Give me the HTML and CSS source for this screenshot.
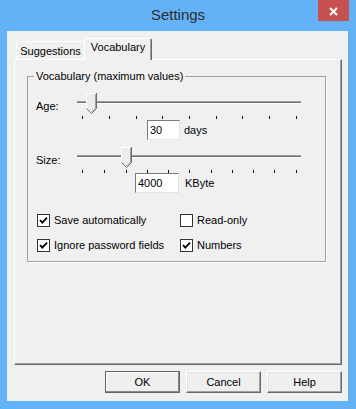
FILE: index.html
```html
<!DOCTYPE html>
<html>
<head>
    <meta charset="UTF-8">
    <title>Settings</title>
    <link rel="stylesheet" href="styles.css">
</head>
<body>
<div class="window">
    <div class="titlebar">
        <span class="title">Settings</span>
        <span class="close">
            <svg width="9" height="9" viewBox="0 0 9 9"><path d="M1 1 L8 8 M8 1 L1 8" stroke="#fff" stroke-width="2"/></svg>
        </span>
    </div>
    <div class="client">
        <div class="tabs">
            <div class="tab">Suggestions</div>
            <div class="tab active">Vocabulary</div>
        </div>
        <div class="panel">
            <fieldset class="group">
                <legend>Vocabulary (maximum values)</legend>

                <div class="slider-row">
                    <label>Age:</label>
                    <svg class="slider" width="226" height="27" viewBox="0 0 226 27">
                        <rect x="0" y="8" width="224" height="1" fill="#a0a0a0"/>
                        <rect x="0" y="9" width="224" height="1" fill="#6d6d6d"/>
                        <rect x="0" y="10" width="224" height="1" fill="#fff"/>
                        <g fill="#000">
                            <rect x="5" y="23" width="1" height="3"/>
                            <rect x="32" y="23" width="1" height="3"/>
                            <rect x="59" y="23" width="1" height="3"/>
                            <rect x="85" y="23" width="1" height="3"/>
                            <rect x="112" y="23" width="1" height="3"/>
                            <rect x="139" y="23" width="1" height="3"/>
                            <rect x="165" y="23" width="1" height="3"/>
                            <rect x="192" y="23" width="1" height="3"/>
                            <rect x="219" y="23" width="1" height="3"/>
                        </g>
                        <g transform="translate(9,0)">
                            <path d="M0.5 0.5 H10.5 V15.5 L5.5 20.5 L0.5 15.5 Z" fill="#ececec"/>
                            <path d="M0.5 15.5 V0.5 H9.5" fill="none" stroke="#fff"/>
                            <path d="M10.5 0 V15.5 L5.5 20.5 L0.5 15.5" fill="none" stroke="#6d6d6d"/>
                            <path d="M9.5 1 V15 L5.5 19" fill="none" stroke="#a0a0a0"/>
                        </g>
                    </svg>
                </div>
                <div class="value-row age-value">
                    <input class="num age" type="text" value="30">
                    <span>days</span>
                </div>

                <div class="slider-row size-row">
                    <label>Size:</label>
                    <svg class="slider" width="226" height="26" viewBox="0 0 226 26">
                        <rect x="0" y="8" width="224" height="1" fill="#a0a0a0"/>
                        <rect x="0" y="9" width="224" height="1" fill="#6d6d6d"/>
                        <rect x="0" y="10" width="224" height="1" fill="#fff"/>
                        <g fill="#000">
                            <rect x="5" y="23" width="1" height="3"/>
                            <rect x="27" y="23" width="1" height="3"/>
                            <rect x="49" y="23" width="1" height="3"/>
                            <rect x="70" y="23" width="1" height="3"/>
                            <rect x="91" y="23" width="1" height="3"/>
                            <rect x="112" y="23" width="1" height="3"/>
                            <rect x="134" y="23" width="1" height="3"/>
                            <rect x="155" y="23" width="1" height="3"/>
                            <rect x="176" y="23" width="1" height="3"/>
                            <rect x="197" y="23" width="1" height="3"/>
                            <rect x="219" y="23" width="1" height="3"/>
                        </g>
                        <g transform="translate(44,0)">
                            <path d="M0.5 0.5 H10.5 V15.5 L5.5 20.5 L0.5 15.5 Z" fill="#ececec"/>
                            <path d="M0.5 15.5 V0.5 H9.5" fill="none" stroke="#fff"/>
                            <path d="M10.5 0 V15.5 L5.5 20.5 L0.5 15.5" fill="none" stroke="#6d6d6d"/>
                            <path d="M9.5 1 V15 L5.5 19" fill="none" stroke="#a0a0a0"/>
                        </g>
                    </svg>
                </div>
                <div class="value-row size-value">
                    <input class="num size" type="text" value="4000">
                    <span>KByte</span>
                </div>

                <div class="checks">
                    <div class="check"><span class="box"><svg width="11" height="11" viewBox="0 0 11 11"><path d="M2 5 L4.3 7.6 L9 2.6" fill="none" stroke="#000" stroke-width="1.8"/></svg></span>Save automatically</div>
                    <div class="check"><span class="box"></span>Read-only</div>
                    <div class="check"><span class="box"><svg width="11" height="11" viewBox="0 0 11 11"><path d="M2 5 L4.3 7.6 L9 2.6" fill="none" stroke="#000" stroke-width="1.8"/></svg></span>Ignore password fields</div>
                    <div class="check"><span class="box"><svg width="11" height="11" viewBox="0 0 11 11"><path d="M2 5 L4.3 7.6 L9 2.6" fill="none" stroke="#000" stroke-width="1.8"/></svg></span>Numbers</div>
                </div>
            </fieldset>
        </div>
        <div class="buttons">
            <button class="default">OK</button>
            <button>Cancel</button>
            <button>Help</button>
        </div>
    </div>
</div>
</body>
</html>
```
FILE: styles.css
```css
body {
  margin: 0;
  font-family: "Liberation Sans", Arial, sans-serif;
  font-size: 11px;
  color: #000;
}

.window {
  width: 356px;
  height: 409px;
  background-color: #63b1f6;
  display: flex;
  flex-direction: column;
}

.titlebar {
  height: 31px;
  display: grid;
  grid-template-columns: 1fr auto 1fr;
  align-items: start;
}

.title {
  grid-column: 2;
  font-size: 15px;
  line-height: 15px;
  margin-top: 7px;
  color: #2e2e2e;
}

.close {
  grid-column: 3;
  justify-self: end;
  margin-right: 7px;
  width: 31px;
  height: 21px;
  background-color: #c75050;
  display: flex;
  align-items: center;
  justify-content: center;
}

.close svg {
  margin-top: 1px;
}

.client {
  flex: 1;
  margin: 0 8px 8px 7px;
  background-color: #f0f0f0;
  padding: 7px 6px 8px 7px;
  display: flex;
  flex-direction: column;
}

/* tab strip */
.tabs {
  display: flex;
  align-items: flex-end;
  height: 21px;
}

.tab {
  box-sizing: border-box;
  height: 18px;
  width: 69px;
  margin-left: 2px;
  border: 1px solid;
  border-color: #fff #a0a0a0 transparent #fff;
  border-bottom: none;
  border-radius: 2px 2px 0 0;
  text-align: center;
  line-height: 16px;
  padding-top: 1px;
}

.tab.active {
  position: relative;
  z-index: 1;
  height: 22px;
  width: 68px;
  margin-left: -1px;
  margin-bottom: -1px;
  background-color: #f0f0f0;
  border-color: #fff #696969 transparent #fff;
  box-shadow: inset -1px 0 0 #a0a0a0;
  padding-top: 0;
  line-height: 17px;
}

.panel {
  flex: 1;
  border: 1px solid;
  border-color: #fff #696969 #696969 #fff;
  box-shadow: inset -1px -1px 0 #a0a0a0;
  padding: 10px 15px 0 12px;
}

/* group box */
.group {
  margin: 0;
  min-width: 0;
  padding: 10px 0 9px 8px;
  border: 1px solid #a0a0a0;
  box-shadow: 1px 1px 0 #fff;
}

.group legend {
  padding: 0 2px;
  margin-left: -2px;
  line-height: 13px;
}

.slider-row {
  display: flex;
  align-items: flex-start;
}

.slider-row label {
  width: 41px;
  margin-top: 7px;
  line-height: 13px;
}

.size-row {
  margin-top: 7px;
}

.value-row {
  display: flex;
  align-items: center;
  gap: 4px;
  height: 20px;
}

.age-value {
  margin-left: 111px;
}

.size-value {
  margin-left: 99px;
  gap: 6px;
}

.num {
  box-sizing: border-box;
  height: 20px;
  margin: 0;
  padding: 0 2px;
  font-family: "Liberation Sans", Arial, sans-serif;
  font-size: 11px;
  color: #000;
  background-color: #fff;
  border: 1px solid;
  border-color: #7a7a7a #e3e3e3 #e3e3e3 #7a7a7a;
  outline: none;
}

.num.age {
  width: 33px;
}

.num.size {
  width: 44px;
}

.checks {
  display: grid;
  grid-template-columns: 143px auto;
  row-gap: 12px;
  margin-top: 21px;
  margin-left: 1px;
}

.check {
  display: flex;
  align-items: center;
  gap: 4px;
  height: 13px;
  line-height: 13px;
}

.box {
  box-sizing: border-box;
  width: 13px;
  height: 13px;
  border: 1px solid #333;
  background-color: #fff;
  display: flex;
}

/* dialog buttons */
.buttons {
  display: flex;
  justify-content: flex-end;
  gap: 6px;
  margin-top: 6px;
}

button {
  box-sizing: border-box;
  width: 75px;
  height: 22px;
  margin: 0;
  padding: 0;
  font-family: "Liberation Sans", Arial, sans-serif;
  font-size: 11px;
  color: #000;
  background-color: #efefef;
  border: 1px solid;
  border-color: #fff #696969 #696969 #fff;
  box-shadow: inset -1px -1px 0 #a0a0a0, inset 1px 1px 0 #e3e3e3;
}

button.default {
  border: 1px solid #646464;
  box-shadow: inset -1px -1px 0 #8a8a8a, inset 1px 1px 0 #fff;
}
```
